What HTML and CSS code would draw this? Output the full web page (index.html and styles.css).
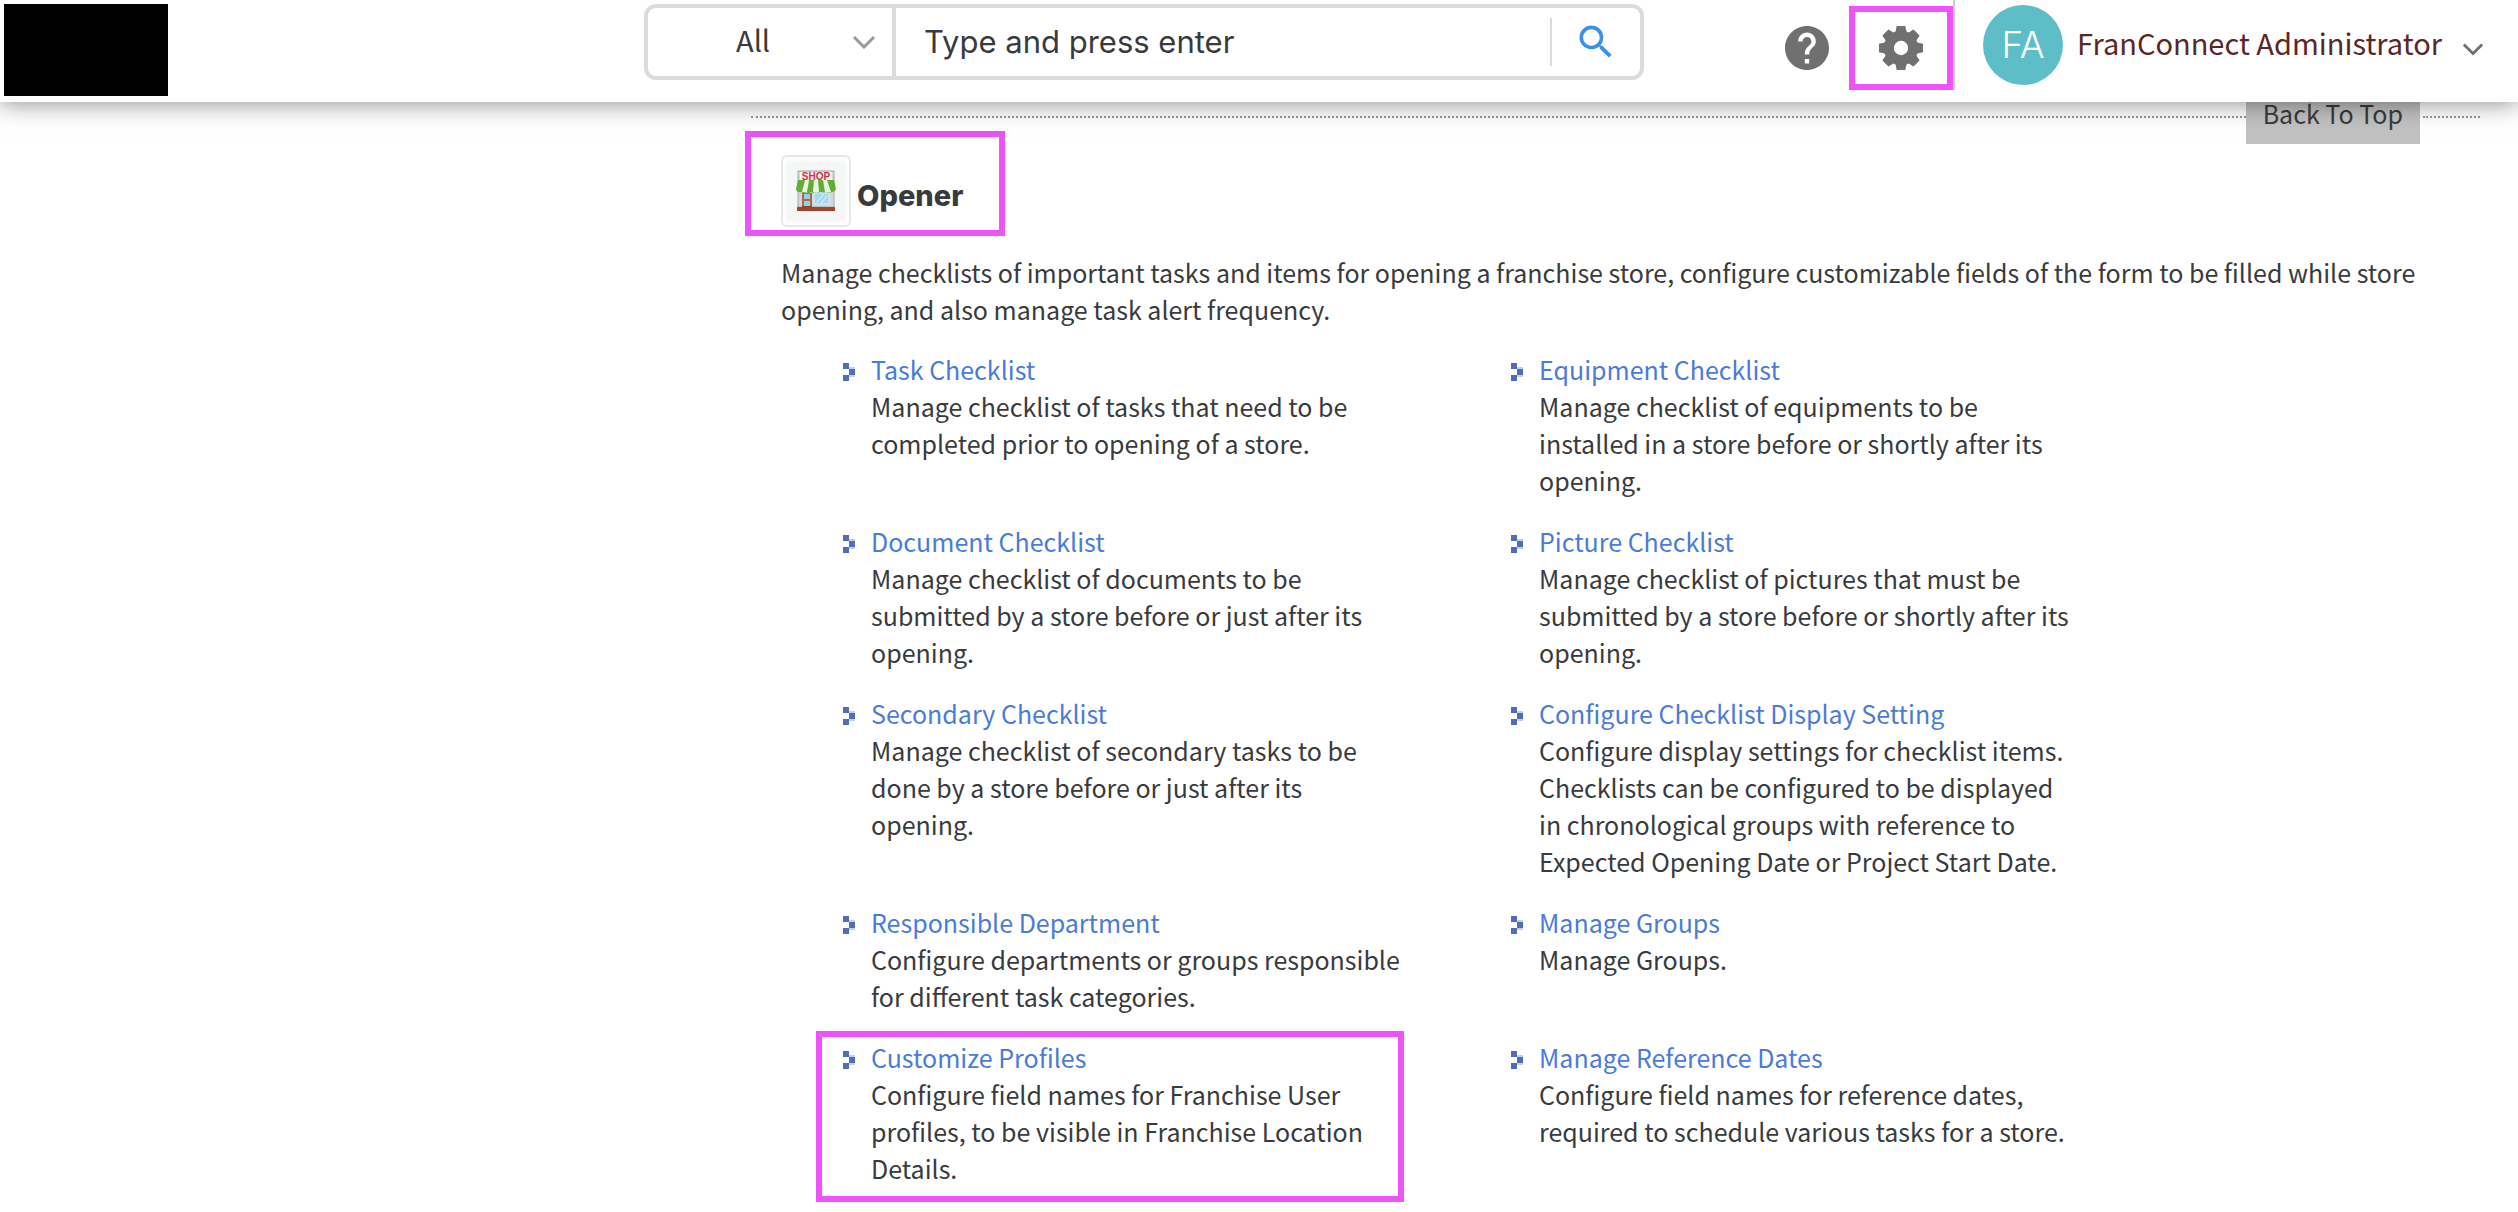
FILE: index.html
```html
<!DOCTYPE html>
<html lang="en">
<head>
<meta charset="utf-8">
<meta name="viewport" content="width=device-width, initial-scale=1">
<title>Opener – Administration</title>
<link rel="stylesheet" href="styles.css">
</head>
<body>
<header class="topbar">
  <div class="logo"></div>
  <form class="search" role="search">
    <div class="scope">
      <select class="scope-select" aria-label="Search in"><option>All</option></select>
      <svg class="chevron scope-chevron" viewBox="0 0 24 14" aria-hidden="true"><path d="M2 2l10 10L22 2"/></svg>
    </div>
    <input class="search-input" type="text" placeholder="Type and press enter" aria-label="Search text">
    <button class="search-button" type="submit" aria-label="Search">
      <svg class="search-icon" viewBox="0 0 24 24"><path d="M15.5 14h-.79l-.28-.27A6.47 6.47 0 0 0 16 9.500 6.500 6.500 0 1 0 9.500 16c1.610 0 3.090-.59 4.230-1.570l.27.28v.79l5 4.990L20.490 19l-4.990-5zm-6 0C7.010 14 5 11.990 5 9.500S7.010 5 9.500 5 14 7.010 14 9.500 11.990 14 9.500 14z"/></svg>
    </button>
  </form>
  <div class="tools">
    <button class="icon-button" type="button" aria-label="Help">
      <svg class="icon" viewBox="2 2 20 20"><path d="M12 2C6.480 2 2 6.480 2 12s4.480 10 10 10 10-4.480 10-10S17.520 2 12 2zm1 17h-2v-2h2v2zm2.070-7.750l-.9.920C13.450 12.900 13 13.500 13 15h-2v-.5c0-1.100.45-2.100 1.170-2.830l1.240-1.260c.37-.36.59-.86.59-1.410 0-1.100-.9-2-2-2s-2 .9-2 2H8c0-2.210 1.790-4 4-4s4 1.790 4 4c0 .88-.36 1.680-.93 2.250z"/></svg>
    </button>
    <button class="icon-button marked" type="button" aria-label="Settings">
      <svg class="icon" viewBox="-22 -22 44 44">
        <defs><path id="tooth" d="M-4.300-22h8.600L6-14H-6z"/></defs>
        <circle class="gear-body" r="12.200"/>
        <use href="#tooth"/><use href="#tooth" transform="rotate(45)"/><use href="#tooth" transform="rotate(90)"/><use href="#tooth" transform="rotate(135)"/><use href="#tooth" transform="rotate(180)"/><use href="#tooth" transform="rotate(225)"/><use href="#tooth" transform="rotate(270)"/><use href="#tooth" transform="rotate(315)"/>
      </svg>
    </button>
    <button class="account" type="button">
      <span class="avatar">FA</span>
      <span class="account-name">FranConnect Administrator</span>
      <svg class="chevron account-chevron" viewBox="0 0 24 14" aria-hidden="true"><path d="M2 2l10 10L22 2"/></svg>
    </button>
  </div>
</header>

<main class="content">
  <div class="separator">
    <hr class="dots">
    <a class="back-to-top" href="#">Back To Top</a>
    <hr class="dots dots-end">
  </div>

  <section class="module">
    <h1 class="module-title">
      <span class="module-icon">
        <svg viewBox="0 0 40 42" aria-hidden="true">
          <rect x="2" y="1" width="36" height="36" fill="#d3d6da" stroke="#a6aab0"/>
          <rect x="4" y="2" width="32" height="8" fill="#f5f3f3"/>
          <path d="M2 10h36l2 9q-2 4-5 3-2 2-5 0-2 2-5 0-2 2-5 0-2 2-5 0-2 2-5 0-2 2-5 0-4 1-5-3z" fill="#62ad35"/>
          <path d="M9 10h4l-2 12H6zM18 10h4l1 12h-6zM27 10h4l4 12h-6z" fill="#e9f7dd"/>
          <text x="20" y="10" class="shop-sign">SHOP</text>
          <path d="M6 23h10v15H6z" fill="#b9683e"/>
          <path d="M8 24h6v5H8zM8 31h6v6H8z" fill="#8fd0f2"/>
          <rect x="18" y="23" width="15" height="11" fill="#a5d8f5" stroke="#dceefa"/>
          <path d="M21 32l7-8M25 33l6-7" stroke="#e6f6ff"/>
          <path d="M1 37h38v4H1z" fill="#a5432f"/><path d="M6 36h10v3H6z" fill="#8c4a33"/>
        </svg>
      </span>
      <span class="module-name">Opener</span>
    </h1>
    <p class="module-intro">Manage checklists of important tasks and items for opening a franchise store, configure customizable fields of the form to be filled while store opening, and also manage task alert frequency.</p>

    <ul class="links">
      <li class="item"><a class="item-link" href="#">Task Checklist</a><p class="item-text">Manage checklist of tasks that need to be completed prior to opening of a store.</p></li>
      <li class="item"><a class="item-link" href="#">Equipment Checklist</a><p class="item-text">Manage checklist of equipments to be installed in a store before or shortly after its opening.</p></li>
      <li class="item"><a class="item-link" href="#">Document Checklist</a><p class="item-text">Manage checklist of documents to be submitted by a store before or just after its opening.</p></li>
      <li class="item"><a class="item-link" href="#">Picture Checklist</a><p class="item-text">Manage checklist of pictures that must be submitted by a store before or shortly after its opening.</p></li>
      <li class="item"><a class="item-link" href="#">Secondary Checklist</a><p class="item-text">Manage checklist of secondary tasks to be done by a store before or just after its opening.</p></li>
      <li class="item"><a class="item-link" href="#">Configure Checklist Display Setting</a><p class="item-text">Configure display settings for checklist items. Checklists can be configured to be displayed in chronological groups with reference to Expected Opening Date or Project Start Date.</p></li>
      <li class="item"><a class="item-link" href="#">Responsible Department</a><p class="item-text">Configure departments or groups responsible for different task categories.</p></li>
      <li class="item"><a class="item-link" href="#">Manage Groups</a><p class="item-text">Manage Groups.</p></li>
      <li class="item item-marked"><a class="item-link" href="#">Customize Profiles</a><p class="item-text">Configure field names for Franchise User profiles, to be visible in Franchise Location Details.</p></li>
      <li class="item"><a class="item-link" href="#">Manage Reference Dates</a><p class="item-text">Configure field names for reference dates, required to schedule various tasks for a store.</p></li>
    </ul>
  </section>
</main>
</body>
</html>
```
FILE: styles.css
```css
* { box-sizing: border-box; }

body {
  margin: 0;
  background: #fff;
  color: #393a3c;
  font-family: "Noto Sans CJK SC", "Noto Sans", sans-serif;
  font-size: 25px;
  line-height: 37px;
}

button, input, select { font: inherit; color: inherit; border: 0; background: none; padding: 0; margin: 0; }
h1, p, ul { margin: 0; padding: 0; }

/* Top bar */
.topbar {
  position: sticky;
  top: 0;
  z-index: 2;
  display: flex;
  align-items: flex-start;
  height: 102px;
  padding: 4px 34px 0 4px;
  background: #fff;
  box-shadow: 0 0 24px rgba(0, 0, 0, 0.5);
  font-size: 29px;
}
.logo { flex: none; width: 164px; height: 92px; background: #000; }

.search {
  display: flex;
  align-items: center;
  flex: 0 1 1000px;
  height: 76px;
  margin-left: min(476px, 19vw);
  border: 4px solid #dbdbdb;
  border-radius: 12px;
}
.scope { position: relative; flex: none; width: 248px; height: 68px; border-right: 4px solid #dbdbdb; }
.scope-select { width: 100%; height: 100%; padding: 0 0 6px 88px; appearance: none; }
.chevron { width: 24px; height: 14px; fill: none; stroke: #999; stroke-width: 3; }
.scope-chevron { position: absolute; right: 16px; top: 27px; pointer-events: none; }
.search-input { flex: 1; min-width: 0; height: 68px; padding: 0 0 2px 28px; font-family: Inter, sans-serif; font-size: 31px; }
.search-input::placeholder { color: #393a3c; opacity: 1; }
.search-button { flex: none; width: 90px; height: 48px; border-left: 2px solid #dbdbdb; }
.search-icon { display: block; width: 44px; height: 44px; margin-left: 22px; fill: #3d8fe8; }

.tools { display: flex; align-items: flex-start; margin-left: auto; }
.icon-button { display: grid; place-items: center; width: 104px; height: 84px; margin-top: 2px; }
.icon { width: 44px; height: 44px; fill: #707070; }
.gear-body { fill: none; stroke: #707070; stroke-width: 10; }
.marked { margin-left: -10px; border: 6px solid #ed53f8; }
.account {
  display: flex;
  align-items: center;
  height: 90px;
  margin-top: -4px;
  padding-left: 28px;
  border-left: 2px solid #ccc;
  color: #5a2626;
}
.avatar {
  width: 80px;
  height: 80px;
  border-radius: 50%;
  background: #5dbec8;
  color: #fff;
  font-family: Inter, sans-serif;
  font-size: 37px;
  font-weight: 300;
  line-height: 80px;
}
.account-name { margin-left: 14px; padding-bottom: 5px; }
.account-chevron { width: 22px; margin: 8px 0 0 20px; stroke: #707070; }

/* Page content */
.content { padding: 0 38px 0 751px; }
.separator { display: flex; align-items: center; height: 55px; margin-top: -13px; }
.dots { flex: 1; margin: 0; border: 0; border-top: 2px dotted #999; }
.dots-end { flex: 0 0 57px; margin-left: 3px; }
.back-to-top { padding: 6px 17px 12px; background: #c1c1c1; color: inherit; text-decoration: none; }

.module { padding: 0 30px; }
.module-title {
  position: relative;
  display: flex;
  align-items: center;
  gap: 6px;
  width: max-content;
  margin-top: 11px;
  height: 72px;
  font-family: Inter, sans-serif;
  font-size: 29px;
  font-weight: 800;
}
.module-title::after {
  content: "";
  position: absolute;
  inset: -24px -42px -9px -36px;
  border: 6px solid #ed53f8;
}
.module-name { padding-top: 8px; }
.module-icon {
  display: grid;
  place-items: center;
  width: 70px;
  height: 72px;
  border: 2px solid #e6e8e8;
  border-radius: 6px;
  background: #f5f6f6;
  box-shadow: inset 0 0 4px 3px #fff;
}
.module-icon svg { width: 40px; height: 42px; }
.shop-sign { font: 700 10px "Liberation Sans", sans-serif; fill: #d6303c; text-anchor: middle; }
.module-intro { margin-top: 27px; }

.links {
  display: grid;
  grid-template-columns: 564px 564px;
  gap: 24px 104px;
  margin: 23px 0 0 62px;
  padding-bottom: 22px;
  list-style: none;
}
.item { position: relative; padding-left: 28px; }
.item::before {
  content: "";
  position: absolute;
  left: 0;
  top: 12px;
  width: 12px;
  height: 18px;
  background:
    linear-gradient(#4f6db8, #4f6db8) 0 0 / 6px 6px no-repeat,
    linear-gradient(#4f6db8, #4f6db8) 6px 6px / 6px 6px no-repeat,
    linear-gradient(#4f6db8, #4f6db8) 0 12px / 6px 6px no-repeat,
    linear-gradient(#c5cfe8, #c5cfe8) 6px 4px / 6px 10px no-repeat;
}
.item-link { color: #4a7bd8; text-decoration: none; }
.item-marked::after {
  content: "";
  position: absolute;
  inset: -8px 3px -15px -27px;
  border: 6px solid #ed53f8;
  pointer-events: none;
}
```
